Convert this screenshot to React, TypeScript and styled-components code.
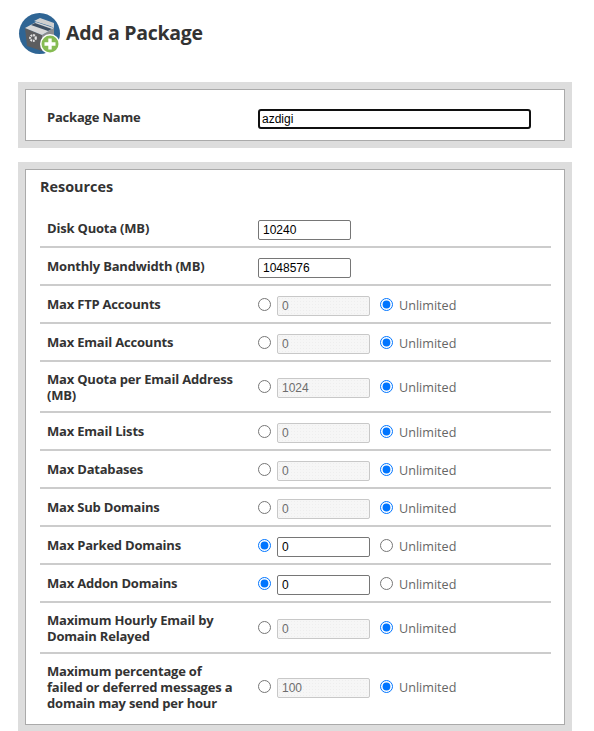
import { createGlobalStyle } from "styled-components";
import styled from "styled-components";

type Limit = {
  label: string;
  value: string;
  unlimited: boolean;
  tall?: boolean;
};

const limits: Limit[] = [
  { label: "Max FTP Accounts", value: "0", unlimited: true },
  { label: "Max Email Accounts", value: "0", unlimited: true },
  { label: "Max Quota per Email Address (MB)", value: "1024", unlimited: true, tall: true },
  { label: "Max Email Lists", value: "0", unlimited: true },
  { label: "Max Databases", value: "0", unlimited: true },
  { label: "Max Sub Domains", value: "0", unlimited: true },
  { label: "Max Parked Domains", value: "0", unlimited: false },
  { label: "Max Addon Domains", value: "0", unlimited: false },
  { label: "Maximum Hourly Email by Domain Relayed", value: "0", unlimited: true, tall: true },
  {
    label: "Maximum percentage of failed or deferred messages a domain may send per hour",
    value: "100",
    unlimited: true,
    tall: true,
  },
];

function PackageIcon() {
  return (
    <svg width="44" height="44" viewBox="0 0 44 44">
      <circle cx="21.5" cy="20.5" r="20.5" fill="#2f6594" />
      <path d="M7 15 L24 22 L24 38 L9 33 Z" fill="#5c5d5f" />
      <path d="M24 22 L36 15 L36 31 L24 38 Z" fill="#8c8d8f" />
      <path d="M7 15 L18 9 L36 15 L24 22 Z" fill="#d8d8d8" />
      <path d="M13 12 L17 10 L34 16 L30 18 Z" fill="#3d4f63" />
      <path d="M16 8 L22 5 L36 10 L36 15 L32 13 Z" fill="#cfcfcf" />
      <circle cx="15" cy="25" r="2.8" fill="none" stroke="#e4e4e4" strokeWidth="2.2" strokeDasharray="1.8 0.8" />
      <circle cx="32" cy="31" r="10" fill="#fff" />
      <circle cx="32" cy="31" r="8.5" fill="#86bb53" />
      <path d="M32 25.5 V36.5 M26.5 31 H37.5" stroke="#fff" strokeWidth="3.4" />
    </svg>
  );
}

function App() {
  return (
    <Page>
      <GlobalStyle />
      <Header>
        <PackageIcon />
        <Title>Add a Package</Title>
      </Header>
      <Panel>
        <NameCard>
          <NameLabel>Package Name</NameLabel>
          <NameInput defaultValue="azdigi" />
        </NameCard>
      </Panel>
      <ResourcesPanel>
        <ResourcesCard>
          <SectionTitle>Resources</SectionTitle>
          <Row>
            <Label>Disk Quota (MB)</Label>
            <PlainInput defaultValue="10240" />
          </Row>
          <Row>
            <Label>Monthly Bandwidth (MB)</Label>
            <PlainInput defaultValue="1048576" />
          </Row>
          {limits.map((limit, i) => (
            <Row key={limit.label} $tall={limit.tall} $last={i === limits.length - 1}>
              <Label $tall={limit.tall}>{limit.label}</Label>
              <Choice>
                <Radio type="radio" name={limit.label} defaultChecked={!limit.unlimited} />
                <LimitInput defaultValue={limit.value} disabled={limit.unlimited} />
                <Radio type="radio" name={limit.label} defaultChecked={limit.unlimited} />
                <Unlimited>Unlimited</Unlimited>
              </Choice>
            </Row>
          ))}
        </ResourcesCard>
      </ResourcesPanel>
    </Page>
  );
}

const GlobalStyle = createGlobalStyle`
  html, body {
    margin: 0;
    padding: 0;
    background: #fff;
  }
`;

const Page = styled.div`
  width: 594px;
  height: 731px;
  overflow: hidden;
  padding: 14px 22px 0 18px;
  box-sizing: border-box;
  font-family: "Open Sans", sans-serif;
  color: #333;
`;

const Header = styled.div`
  display: flex;
  align-items: center;
  gap: 4px;
  height: 42px;
  margin-bottom: 26px;
`;

const Title = styled.h1`
  margin: 0 0 4px;
  font-size: 19.5px;
  line-height: 26px;
  font-weight: 700;
  letter-spacing: -0.3px;
  color: #333;
`;

const Panel = styled.div`
  background: #ddd;
  padding: 7px;
`;

const ResourcesPanel = styled(Panel)`
  margin-top: 14px;
`;

const Card = styled.div`
  background: #fff;
  border: 1px solid #aaa;
`;

const NameCard = styled(Card)`
  display: grid;
  grid-template-columns: 211px 273px;
  align-items: center;
  height: 52px;
  box-sizing: border-box;
  padding: 8px 0 0 21px;
`;

const ResourcesCard = styled(Card)`
  padding: 0 13px 0 14px;
`;

const SectionTitle = styled.h2`
  margin: 0;
  padding-top: 7px;
  height: 40px;
  box-sizing: border-box;
  font-size: 14.4px;
  line-height: 19px;
  font-weight: 700;
  color: #333;
`;

const Row = styled.div<{ $tall?: boolean; $last?: boolean }>`
  display: grid;
  grid-template-columns: 211px 1fr;
  align-items: center;
  box-sizing: border-box;
  min-height: 38px;
  padding: 8px 0 ${(p) => (p.$last ? "11px" : p.$tall ? "6px" : "4px")} 7px;
  border-bottom: ${(p) => (p.$last ? "none" : "2px solid #ccc")};
`;

const Label = styled.label<{ $tall?: boolean }>`
  display: block;
  max-width: 190px;
  margin: ${(p) => (p.$tall ? "1px 0 2px" : "0 0 5px")};
  font-size: 13px;
  line-height: 16px;
  font-weight: 700;
  letter-spacing: -0.2px;
  color: #333;
`;

const NameLabel = styled(Label)`
  margin: 0 0 4px;
`;

const TextField = styled.input`
  box-sizing: border-box;
  height: 20px;
  margin: 0;
  padding: 1px 4px;
  font-family: "Liberation Sans", Arial, sans-serif;
  font-size: 12px;
  color: #000;
  background: #fff;
  border: 1px solid #767676;
  border-radius: 2px;
  outline: none;
`;

const NameInput = styled(TextField)`
  width: 273px;
  border: 2px solid #101010;
  border-radius: 3px;
  padding: 1px 2px;
`;

const PlainInput = styled(TextField)`
  width: 93px;
`;

const Choice = styled.div`
  display: flex;
  align-items: center;
`;

const Radio = styled.input`
  width: 13px;
  height: 13px;
  margin: 0 0 3px;
  flex: none;
  accent-color: #0075ff;
`;

const LimitInput = styled(TextField)`
  width: 93px;
  margin: 0 10px 0 6px;

  &:disabled {
    background-color: #f6f6f6;
    background-image: radial-gradient(#eee 1px, transparent 1px);
    background-size: 3px 3px;
    color: #6d6d6d;
    border-color: #c8c8c8;
  }
`;

const Unlimited = styled.span`
  margin-left: 6px;
  font-size: 12.6px;
  line-height: 18px;
  color: #666;
`;

export default App;
